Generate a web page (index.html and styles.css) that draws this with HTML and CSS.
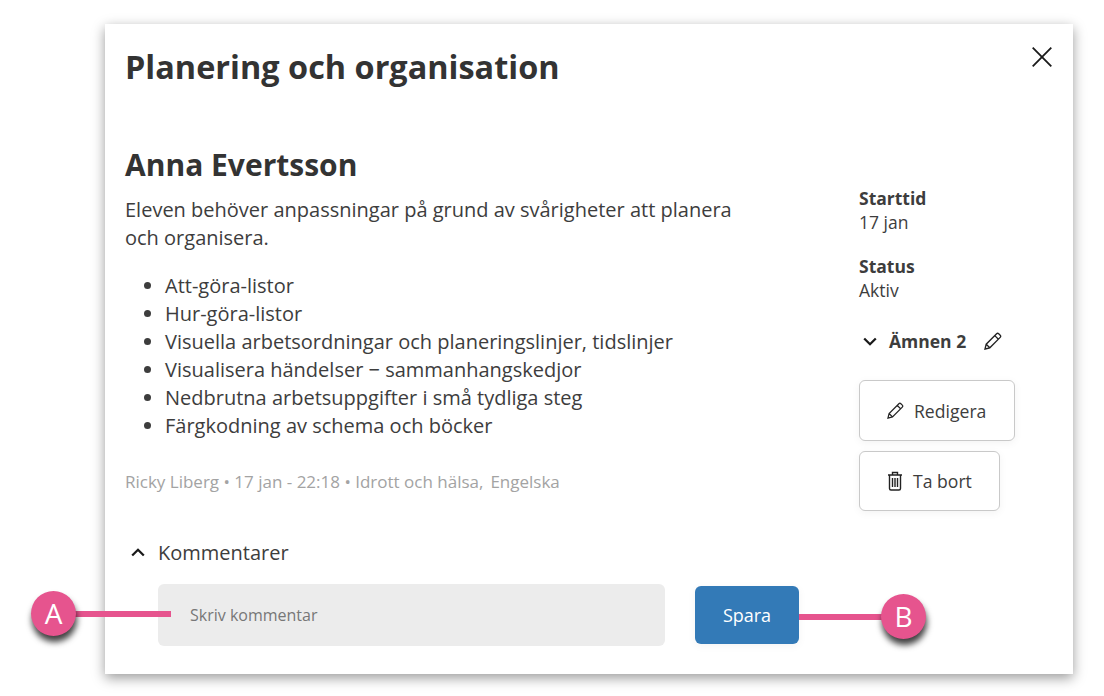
FILE: index.html
```html
<!DOCTYPE html>
<html lang="sv">
<head>
<meta charset="utf-8">
<title>Planering och organisation</title>
<link rel="stylesheet" href="styles.css">
</head>
<body>
<div class="modal">
  <header class="modal-head">
    <h1 class="title">Planering och organisation</h1>
    <button class="close" aria-label="Stäng">
      <svg width="20" height="20" viewBox="0 0 20 20"><path d="M.7 .7 19.300 19.300M19.300 .7 .7 19.300" fill="none" stroke="#1a1a1a" stroke-width="1.800"/></svg>
    </button>
  </header>
  <div class="content">
    <main class="main">
      <h2 class="name">Anna Evertsson</h2>
      <p class="lead">Eleven behöver anpassningar på grund av svårigheter att planera och organisera.</p>
      <ul class="list">
        <li>Att-göra-listor</li>
        <li>Hur-göra-listor</li>
        <li>Visuella arbetsordningar och planeringslinjer, tidslinjer</li>
        <li>Visualisera händelser − sammanhangskedjor</li>
        <li>Nedbrutna arbetsuppgifter i små tydliga steg</li>
        <li>Färgkodning av schema och böcker</li>
      </ul>
      <p class="meta">Ricky Liberg • 17 jan - 22:18 • Idrott och hälsa,<span class="meta-gap">Engelska</span></p>
    </main>
    <aside class="side">
      <div class="field"><div class="label">Starttid</div><div class="value">17 jan</div></div>
      <div class="field"><div class="label">Status</div><div class="value">Aktiv</div></div>
      <div class="subjects">
        <svg class="chev" width="14" height="9" viewBox="0 0 14 9"><path d="M1.200 1.500 7 7.200l5.800-5.700" fill="none" stroke="#1a1a1a" stroke-width="2.300"/></svg>
        <span class="subjects-label">Ämnen 2</span>
        <svg class="pencil" width="18" height="18" viewBox="0 0 18 18"><path d="M1 17l1.200-4.800L12.600 1.800a1.500 1.500 0 0 1 2.100 0l1.500 1.500a1.500 1.500 0 0 1 0 2.100L5.800 15.800 1 17zM2.200 12.200l3.600 3.600M10.800 3.600l3.600 3.600" fill="none" stroke="#222" stroke-width="1.300"/></svg>
      </div>
      <button class="btn btn-edit">
        <svg width="17" height="17" viewBox="0 0 18 18"><path d="M1 17l1.200-4.800L12.600 1.800a1.500 1.500 0 0 1 2.100 0l1.500 1.500a1.500 1.500 0 0 1 0 2.100L5.800 15.800 1 17zM2.200 12.200l3.600 3.600M10.800 3.600l3.600 3.600" fill="none" stroke="#222" stroke-width="1.300"/></svg>
        Redigera
      </button>
      <button class="btn btn-delete">
        <svg width="16" height="20" viewBox="0 0 16 20"><path d="M1 4h14M5.500 4V1.500h5V4M2.500 4v13.500a1.500 1.500 0 0 0 1.500 1.500h8a1.500 1.500 0 0 0 1.500-1.500V4M5.500 7v9M8 7v9M10.500 7v9" fill="none" stroke="#222" stroke-width="1.400"/></svg>
        Ta bort
      </button>
    </aside>
  </div>
  <section class="comments">
    <div class="comments-head">
      <svg width="14" height="9" viewBox="0 0 14 9"><path d="M1.200 7.500 7 1.800l5.800 5.700" fill="none" stroke="#1a1a1a" stroke-width="2.300"/></svg>
      <span>Kommentarer</span>
    </div>
    <div class="comment-row">
      <div class="comment-input">Skriv kommentar</div>
      <button class="save">Spara</button>
    </div>
  </section>
</div>
<div class="line line-a"></div>
<div class="line line-b"></div>
<div class="pin pin-a">A</div>
<div class="pin pin-b">B</div>
</body>
</html>
```
FILE: styles.css
```css
* { box-sizing: border-box; }
html, body { margin: 0; padding: 0; }
body {
  width: 1104px;
  height: 696px;
  overflow: hidden;
  background: #fff;
  font-family: "Open Sans", sans-serif;
  color: #3d3d3d;
  padding: 24px 31px 22px 105px;
}
.modal {
  width: 968px;
  height: 650px;
  background: #fff;
  box-shadow: 0 4px 12px rgba(0,0,0,.4);
  padding: 0 20px;
  display: flex;
  flex-direction: column;
}
.modal-head {
  display: flex;
  justify-content: space-between;
  align-items: flex-start;
  height: 121px;
}
.title {
  margin: 20px 0 0;
  font-size: 32.450px;
  line-height: 46px;
  font-weight: 700;
  color: #333;
}
.close {
  margin: 23px 1px 0 0;
  padding: 0;
  border: 0;
  background: none;
  display: block;
  height: 20px;
  line-height: 0;
}
.content { display: flex; height: 397px; }
.main { width: 734px; }
.name {
  margin: 0;
  font-size: 30px;
  line-height: 40px;
  font-weight: 700;
  color: #333;
}
.lead {
  width: 630px;
  margin: 11px 0 0;
  font-size: 20px;
  line-height: 28px;
}
.list {
  margin: 20px 0 0;
  padding: 0 0 0 40px;
  font-size: 20px;
  line-height: 28px;
}
.meta {
  margin: 30px 0 0;
  font-size: 17px;
  line-height: 24px;
  color: #a3a3a3;
}
.meta-gap { margin-left: 7px; }
.side { width: 190px; padding-top: 41px; }
.field { margin-bottom: 20px; font-size: 17.500px; line-height: 24px; }
.label { font-weight: 700; }
.subjects {
  display: flex;
  align-items: center;
  height: 24px;
  margin-top: 27px;
  font-size: 17.500px;
  font-weight: 700;
}
.chev { margin-left: 4px; margin-right: 12px; }
.pencil { margin-left: 18px; }
.btn {
  display: flex;
  align-items: center;
  background: #fff;
  border: 1px solid #c9c9c9;
  border-radius: 6px;
  font-family: inherit;
  font-size: 17.600px;
  color: #3d3d3d;
  box-shadow: 0 2px 8px rgba(0,0,0,.05);
}
.btn-edit { width: 156px; height: 61px; margin-top: 27px; padding: 0 0 0 27px; gap: 10px; }
.btn-delete { width: 141px; height: 60px; margin-top: 10px; padding: 0 0 0 27px; gap: 10px; }
.comments-head {
  display: flex;
  align-items: center;
  height: 28px;
  margin-left: 6px;
  margin-top: -4px;
  gap: 13px;
  font-size: 20px;
}
.comment-row { display: flex; align-items: center; margin: 18px 0 0 33px; }
.comment-input {
  width: 507px;
  height: 62px;
  padding-left: 32px;
  display: flex;
  align-items: center;
  background: #ececec;
  border-radius: 6px;
  font-size: 16px;
  color: #777;
}
.save {
  width: 104px;
  height: 58px;
  margin-left: 30px;
  border: 0;
  border-radius: 6px;
  background: #337ab7;
  color: #fff;
  font-family: inherit;
  font-size: 18px;
  box-shadow: 0 2px 8px rgba(0,0,0,.05);
}
.line { position: absolute; height: 6px; background: #e6548e; }
.line-a { left: 70px; top: 611px; width: 101px; }
.line-b { left: 799px; top: 614px; width: 90px; }
.pin {
  position: absolute;
  width: 45px;
  height: 45px;
  border-radius: 50%;
  background: #e6548e;
  color: #fff;
  font-size: 28px;
  line-height: 45px;
  text-align: center;
  box-shadow: 1px 6px 6px rgba(0,0,0,.75);
}
.pin-a { left: 31px; top: 591px; }
.pin-b { left: 881px; top: 594px; }
```
